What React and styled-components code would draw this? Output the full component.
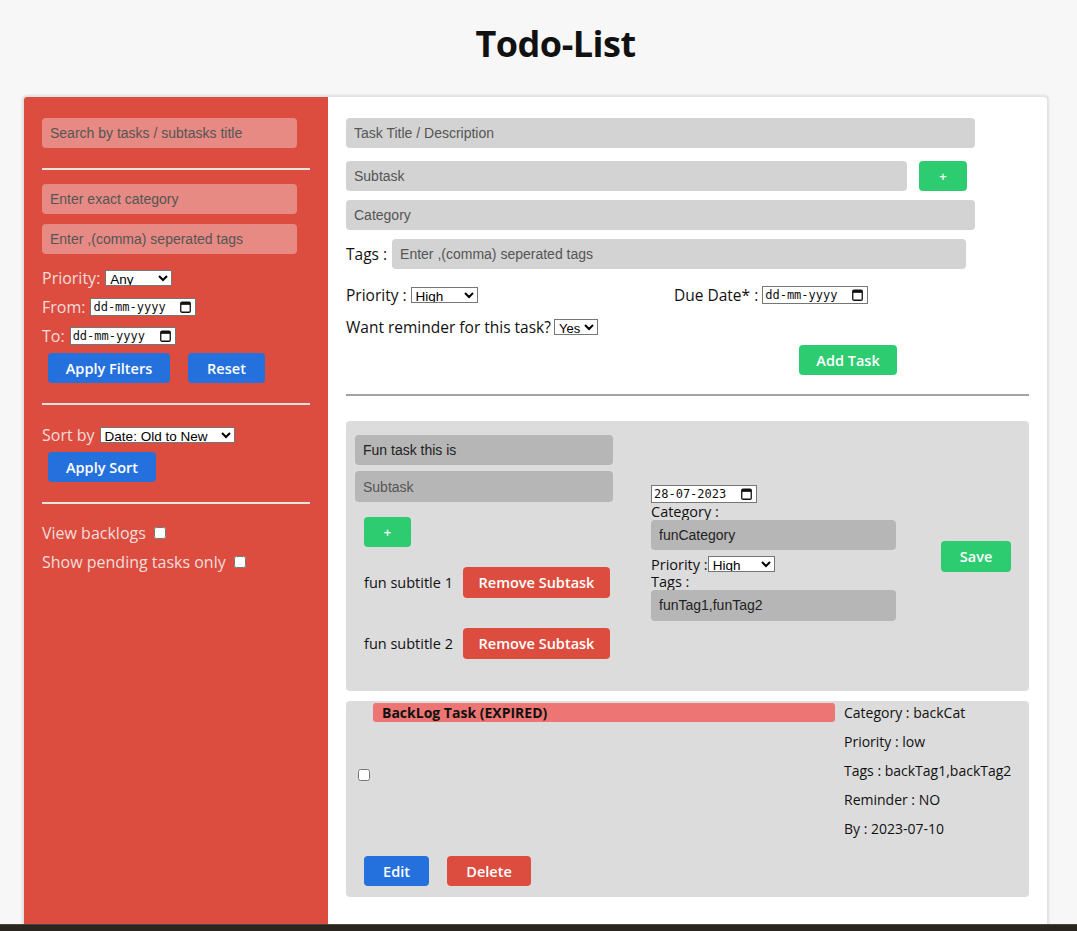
import React from "react";
import styled, { createGlobalStyle } from "styled-components";

const Global = createGlobalStyle`
  html, body { margin: 0; padding: 0; }
  body {
    background: #f7f7f7;
    font-family: "Open Sans", "Noto Sans", sans-serif;
    color: #111;
    overflow: hidden;
  }
  * { box-sizing: border-box; }
`;

const Page = styled.div`
  padding-top: 16px;
  height: 931px;
`;

const Title = styled.h1`
  margin: 0 0 24px;
  text-align: center;
  font-size: 36px;
  font-weight: 700;
  line-height: 56px;
  letter-spacing: -0.5px;
  padding-left: 34px;
`;

const Card = styled.div`
  margin-left: 23px;
  width: 1025px;
  min-height: 840px;
  display: flex;
  background: #fff;
  border: 1px solid #e2e2e2;
  border-radius: 4px;
  box-shadow: 0 0 3px rgba(0, 0, 0, 0.2);
  overflow: hidden;
`;

const Sidebar = styled.aside`
  width: 304px;
  flex: none;
  background: #dc4d40;
  padding: 21px 18px 0 18px;
  color: #f3dedb;
  font-size: 16px;
`;

const Field = styled.input`
  display: block;
  width: ${(p) => p.$w || 255}px;
  height: ${(p) => p.$h || 30}px;
  border: none;
  border-radius: 4px;
  background: ${(p) => p.$bg || "#e68a83"};
  padding: 0 8px;
  font-family: "Liberation Sans", Arial, sans-serif;
  font-size: 14px;
  color: #222;
  margin: ${(p) => p.$m || "0"};
  outline: none;
  &::placeholder { color: #555; }
`;

const Rule = styled.hr`
  border: none;
  height: 2px;
  background: ${(p) => p.$c || "#e6e2e2"};
  margin: ${(p) => p.$m || "20px 0 15px"};
`;

const FilterRow = styled.div`
  display: flex;
  align-items: center;
  height: 29px;
  gap: 5px;
  margin-top: ${(p) => p.$mt || 0}px;
`;

const Select = styled.select`
  font-family: "Liberation Sans", Arial, sans-serif;
  font-size: ${(p) => p.$fs || 13.5}px;
  height: ${(p) => p.$h || 16}px;
  width: ${(p) => p.$w}px;
  border: 1px solid #767676;
  border-radius: 0;
  background: #fff;
  color: #000;
  padding: 0;
  margin: 0;
`;

const DateBox = styled.span`
  display: inline-flex;
  align-items: center;
  justify-content: space-between;
  height: 18px;
  width: 106px;
  flex: none;
  border: 1px solid #767676;
  background: #fff;
  padding: 0 4px 0 2px;
  font-family: "DejaVu Sans Mono", monospace;
  font-size: 12px;
  line-height: 16px;
  color: #111;
  svg { display: block; }
`;

function DateField({ value }) {
  return (
    <DateBox>
      <span>{value || "dd-mm-yyyy"}</span>
      <svg width="11" height="12" viewBox="0 0 11 12">
        <rect x="0.75" y="1.25" width="9.5" height="10" rx="1.2" fill="none" stroke="#111" strokeWidth="1.3" />
        <rect x="0.75" y="1.25" width="9.5" height="2.6" fill="#111" />
      </svg>
    </DateBox>
  );
}

const Btn = styled.button`
  height: ${(p) => p.$h || 30}px;
  width: ${(p) => p.$w}px;
  border: none;
  border-radius: 4px;
  background: ${(p) => p.$bg};
  color: #fff;
  font-family: "Open Sans", "Noto Sans", sans-serif;
  font-size: ${(p) => p.$fs || 14.5}px;
  font-weight: 600;
  padding: 0;
  margin: ${(p) => p.$m || "0"};
  cursor: pointer;
`;

const BtnRow = styled.div`
  display: flex;
  gap: 18px;
  padding-left: 6px;
  margin-top: ${(p) => p.$mt || 0}px;
`;

const CheckRow = styled.label`
  display: flex;
  align-items: center;
  gap: 8px;
  height: 29px;
  input { margin: 0; width: 12px; height: 12px; }
`;

const Main = styled.main`
  flex: 1;
  padding: 21px 18px 0 18px;
  font-size: 15.5px;
`;

const Row = styled.div`
  display: flex;
  align-items: center;
  gap: ${(p) => p.$gap || 0}px;
  margin: ${(p) => p.$m || "0"};
  height: ${(p) => (p.$h ? p.$h + "px" : "auto")};
`;

const Label = styled.span`
  white-space: nowrap;
  margin-right: ${(p) => p.$mr || 0}px;
`;

const PriorityBox = styled.div`
  width: 328px;
  display: flex;
  align-items: center;
`;

const TaskCard = styled.div`
  background: #dcdcdc;
  border-radius: 4px;
  margin-top: ${(p) => p.$mt}px;
`;

const EditCard = styled(TaskCard)`
  display: grid;
  grid-template-columns: 258px 245px 1fr;
  column-gap: 38px;
  align-items: center;
  padding: 14px 9px 32px;
`;

const LeftCol = styled.div`
  display: flex;
  flex-direction: column;
`;

const SubRow = styled.div`
  display: flex;
  align-items: center;
  gap: 10px;
  padding-left: 9px;
  margin-top: ${(p) => p.$mt}px;
  font-size: 14.5px;
`;

const MidCol = styled.div`
  display: flex;
  flex-direction: column;
  font-size: 14.5px;
  line-height: 17px;
  padding-top: 11px;
`;

const SaveCol = styled.div`
  display: flex;
  justify-content: flex-start;
  padding-left: 7px;
  padding-top: 18px;
`;

const BackCard = styled(TaskCard)`
  padding: 2px 0 11px 0;
`;

const BackTop = styled.div`
  display: flex;
`;

const BackLeft = styled.div`
  flex: 1;
  display: grid;
  grid-template-columns: 27px 1fr;
  grid-template-rows: auto 1fr;
`;

const CheckCell = styled.div`
  grid-row: 1 / 3;
  display: flex;
  align-items: center;
  padding-left: 12px;
  padding-top: 8px;
  input { margin: 0; width: 12px; height: 12px; }
`;

const ExpiredBar = styled.div`
  height: 19px;
  background: #ed7674;
  border-radius: 3px;
  padding-left: 9px;
  font-size: 14px;
  font-weight: 700;
  line-height: 19px;
  color: #111;
`;

const InfoCol = styled.div`
  width: 194px;
  padding-left: 9px;
  padding-top: 0;
  display: flex;
  flex-direction: column;
  gap: 9px;
  font-size: 14px;
  line-height: 20px;
`;

const BackBtns = styled.div`
  display: flex;
  gap: 18px;
  padding-left: 18px;
  margin-top: 17px;
`;

const Taskbar = styled.div`
  position: fixed;
  left: 0;
  right: 0;
  bottom: 0;
  height: 7px;
  background: #2b251f;
  border-top: 1px solid #4a4540;
`;

const RED = "#dc4d40";
const BLUE = "#2471dd";
const GREEN = "#2ecc71";

export default function App() {
  return (
    <Page>
      <Global />
      <Title>Todo-List</Title>
      <Card>
        <Sidebar>
          <Field placeholder="Search by tasks / subtasks title" />
          <Rule $m="20px 0 14px" />
          <Field placeholder="Enter exact category" />
          <Field placeholder="Enter ,(comma) seperated tags" $m="10px 0 0" />
          <FilterRow $mt={9}>
            <Label>Priority:</Label>
            <Select $w={67} defaultValue="Any">
              <option>Any</option>
              <option>High</option>
              <option>Medium</option>
              <option>Low</option>
            </Select>
          </FilterRow>
          <FilterRow>
            <Label>From:</Label>
            <DateField />
          </FilterRow>
          <FilterRow>
            <Label>To:</Label>
            <DateField />
          </FilterRow>
          <BtnRow $mt={3}>
            <Btn $bg={BLUE} $w={122}>Apply Filters</Btn>
            <Btn $bg={BLUE} $w={77}>Reset</Btn>
          </BtnRow>
          <Rule $m="20px 0 15px" />
          <FilterRow>
            <Label>Sort by</Label>
            <Select $w={135} defaultValue="old">
              <option value="old">Date: Old to New</option>
              <option value="new">Date: New to Old</option>
            </Select>
          </FilterRow>
          <BtnRow $mt={3}>
            <Btn $bg={BLUE} $w={108}>Apply Sort</Btn>
          </BtnRow>
          <Rule $m="20px 0 14px" />
          <CheckRow>
            View backlogs <input type="checkbox" />
          </CheckRow>
          <CheckRow>
            Show pending tasks only <input type="checkbox" />
          </CheckRow>
        </Sidebar>
        <Main>
          <Field $bg="#d3d3d3" $w={629} placeholder="Task Title / Description" />
          <Row $m="13px 0 0" $gap={12}>
            <Field $bg="#d3d3d3" $w={561} placeholder="Subtask" />
            <Btn $bg={GREEN} $w={48} $fs={13}>+</Btn>
          </Row>
          <Field $bg="#d3d3d3" $w={629} placeholder="Category" $m="9px 0 0" />
          <Row $m="9px 0 0" $h={30}>
            <Label $mr={5}>Tags :</Label>
            <Field $bg="#d3d3d3" $w={574} placeholder="Enter ,(comma) seperated tags" />
          </Row>
          <Row $m="14px 0 0" $h={24}>
            <PriorityBox>
              <Label $mr={4}>Priority :</Label>
              <Select $w={67} defaultValue="High">
                <option>High</option>
                <option>Medium</option>
                <option>Low</option>
              </Select>
            </PriorityBox>
            <Label $mr={4}>Due Date* :</Label>
            <DateField />
          </Row>
          <Row $m="8px 0 0" $h={24}>
            <Label $mr={3}>Want reminder for this task?</Label>
            <Select $w={44} $fs={13} defaultValue="Yes">
              <option>Yes</option>
              <option>No</option>
            </Select>
          </Row>
          <Row $m="6px 0 0">
            <Btn $bg={GREEN} $w={98} $m="0 0 0 453px">Add Task</Btn>
          </Row>
          <Rule $c="#a3a3a3" $m="19px 0 0" />
          <EditCard $mt={25}>
            <LeftCol>
              <Field $bg="#b6b6b6" $w={258} defaultValue="Fun task this is" />
              <Field $bg="#b6b6b6" $w={258} $h={31} placeholder="Subtask" $m="6px 0 0" />
              <SubRow $mt={15}>
                <Btn $bg={GREEN} $w={47} $fs={13}>+</Btn>
              </SubRow>
              <SubRow $mt={20}>
                <span>fun subtitle 1</span>
                <Btn $bg={RED} $w={147} $h={31}>Remove Subtask</Btn>
              </SubRow>
              <SubRow $mt={30}>
                <span>fun subtitle 2</span>
                <Btn $bg={RED} $w={147} $h={31}>Remove Subtask</Btn>
              </SubRow>
            </LeftCol>
            <MidCol>
              <DateField value="28-07-2023" />
              <span>Category :</span>
              <Field $bg="#b6b6b6" $w={245} defaultValue="funCategory" />
              <Row $m="6px 0 0">
                <Label>Priority :</Label>
                <Select $w={67} defaultValue="High">
                  <option>High</option>
                  <option>Medium</option>
                  <option>Low</option>
                </Select>
              </Row>
              <span>Tags :</span>
              <Field $bg="#b6b6b6" $w={245} $h={31} defaultValue="funTag1,funTag2" />
            </MidCol>
            <SaveCol>
              <Btn $bg={GREEN} $w={70} $h={31}>Save</Btn>
            </SaveCol>
          </EditCard>
          <BackCard $mt={10}>
            <BackTop>
              <BackLeft>
                <CheckCell>
                  <input type="checkbox" />
                </CheckCell>
                <ExpiredBar>BackLog Task (EXPIRED)</ExpiredBar>
              </BackLeft>
              <InfoCol>
                <span>Category : backCat</span>
                <span>Priority : low</span>
                <span>Tags : backTag1,backTag2</span>
                <span>Reminder : NO</span>
                <span>By : 2023-07-10</span>
              </InfoCol>
            </BackTop>
            <BackBtns>
              <Btn $bg={BLUE} $w={65}>Edit</Btn>
              <Btn $bg={RED} $w={84}>Delete</Btn>
            </BackBtns>
          </BackCard>
        </Main>
      </Card>
      <Taskbar />
    </Page>
  );
}
